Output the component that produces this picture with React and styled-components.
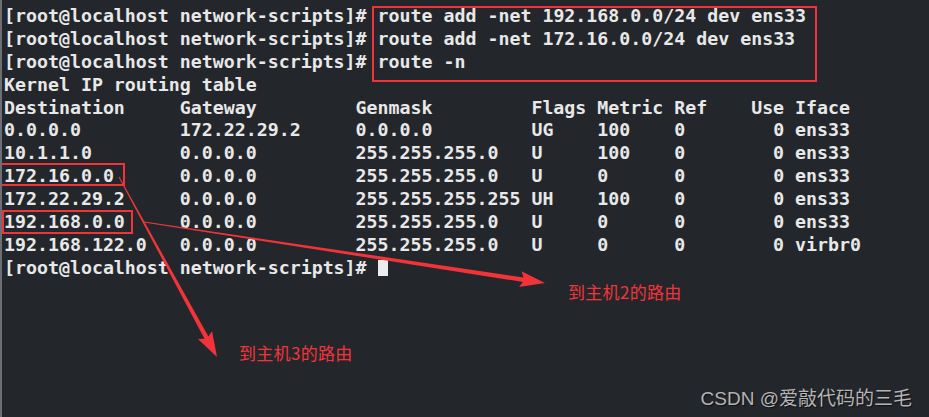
import React from 'react';
import styled, { createGlobalStyle } from 'styled-components';

const RED = '#f2343a';

const Global = createGlobalStyle`
  html, body {
    margin: 0;
    padding: 0;
    background: #23272b;
  }
`;

const Screen = styled.div`
  position: relative;
  width: 929px;
  height: 417px;
  overflow: hidden;
  background: #23272b;
  border-left: 2px solid #6c6f73;
  box-sizing: border-box;
`;

const Terminal = styled.div`
  padding: 5px 0 0 2px;
  font-family: "DejaVu Sans Mono", monospace;
  font-weight: 700;
  font-size: 18.25px;
  line-height: 22.9px;
  color: #e8e8e8;
  white-space: pre;
`;

const Line = styled.div`
  height: 22.9px;
`;

const Commands = styled.div`
  display: flex;
`;

const Prompts = styled.div`
  display: flex;
  flex-direction: column;
`;

// red frame the author drew round the typed commands
const CommandBox = styled.div`
  position: relative;
  display: flex;
  flex-direction: column;

  &::after {
    content: '';
    position: absolute;
    left: -6px;
    top: 1px;
    right: -11px;
    bottom: -8px;
    border: 2px solid ${RED};
  }
`;

// red frame round one destination cell
const Marked = styled.span`
  position: relative;

  &::after {
    content: '';
    position: absolute;
    left: ${p => p.$l}px;
    right: ${p => p.$r}px;
    top: ${p => p.$t}px;
    bottom: ${p => p.$b}px;
    border: 2px solid ${RED};
  }
`;

const Cursor = styled.span`
  display: inline-block;
  width: 10px;
  height: 16px;
  background: #ececec;
  vertical-align: -2px;
`;

const Arrows = styled.svg`
  position: absolute;
  left: 0;
  top: 0;
  pointer-events: none;
`;

const Note = styled.div`
  position: absolute;
  left: ${p => p.x}px;
  top: ${p => p.y}px;
  font-family: "Noto Sans CJK SC", sans-serif;
  font-size: 17px;
  line-height: 1;
  color: ${RED};
  letter-spacing: 0.3px;
`;

const Watermark = styled.div`
  position: absolute;
  right: 17px;
  bottom: 9px;
  font-family: "Liberation Sans", "Noto Sans CJK SC", sans-serif;
  font-size: 19px;
  line-height: 1;
  color: #b4b4b4;
  text-shadow: 1px 1px 1px rgba(0, 0, 0, 0.6);
`;

const PROMPT = '[root@localhost network-scripts]# ';

const commands = [
  'route add -net 192.168.0.0/24 dev ens33',
  'route add -net 172.16.0.0/24 dev ens33',
  'route -n',
];

const rows = [
  { dest: '0.0.0.0', rest: '172.22.29.2     0.0.0.0         UG    100    0        0 ens33' },
  { dest: '10.1.1.0', rest: '0.0.0.0         255.255.255.0   U     100    0        0 ens33' },
  { dest: '172.16.0.0', rest: '0.0.0.0         255.255.255.0   U     0      0        0 ens33', mark: { l: -6, r: 0, t: -2, b: 0 } },
  { dest: '172.22.29.2', rest: '0.0.0.0         255.255.255.255 UH    100    0        0 ens33' },
  { dest: '192.168.0.0', rest: '0.0.0.0         255.255.255.0   U     0      0        0 ens33', mark: { l: -2, r: 3, t: -1, b: -2 } },
  { dest: '192.168.122.0', rest: '0.0.0.0         255.255.255.0   U     0      0        0 virbr0' },
];

// tapered arrow: thin tail, wider shaft near the head, triangle head
const arrowPoints = (x1, y1, x2, y2) => {
  const dx = x2 - x1;
  const dy = y2 - y1;
  const len = Math.hypot(dx, dy);
  const ux = dx / len;
  const uy = dy / len;
  const nx = -uy;
  const ny = ux;
  const headLen = 22;
  const headW = 8;
  const shaftW = 2.2;
  const bx = x2 - ux * headLen;
  const by = y2 - uy * headLen;
  const pts = [
    [x1 + nx * 0.5, y1 + ny * 0.5],
    [bx + nx * shaftW, by + ny * shaftW],
    [bx + nx * headW - ux * 3, by + ny * headW - uy * 3],
    [x2, y2],
    [bx - nx * headW - ux * 3, by - ny * headW - uy * 3],
    [bx - nx * shaftW, by - ny * shaftW],
    [x1 - nx * 0.5, y1 - ny * 0.5],
  ];
  return pts.map(p => p.map(v => v.toFixed(1)).join(',')).join(' ');
};

const Row = ({ dest, rest, mark }) => {
  const pad = ' '.repeat(16 - dest.length);
  return (
    <Line>
      {mark ? (
        <Marked $l={mark.l} $r={mark.r} $t={mark.t} $b={mark.b}>
          {dest + ' '}
        </Marked>
      ) : (
        dest + ' '
      )}
      {pad.slice(1) + rest}
    </Line>
  );
};

const App = () => (
  <>
    <Global />
    <Screen>
      <Terminal>
        <Commands>
          <Prompts>
            {commands.map((c, i) => (
              <Line key={i}>{PROMPT}</Line>
            ))}
          </Prompts>
          <CommandBox>
            {commands.map((c, i) => (
              <Line key={i}>{c}</Line>
            ))}
          </CommandBox>
        </Commands>
        <Line>Kernel IP routing table</Line>
        <Line>Destination     Gateway         Genmask         Flags Metric Ref    Use Iface</Line>
        {rows.map((r, i) => (
          <Row key={i} {...r} />
        ))}
        <Line>
          {PROMPT}
          <Cursor />
        </Line>
      </Terminal>

      <Arrows width="929" height="417">
        <polygon points={arrowPoints(117, 177, 215, 357)} fill={RED} />
        <polygon points={arrowPoints(142, 222, 543, 283)} fill={RED} />
      </Arrows>

      <Note x={237} y={344}>到主机3的路由</Note>
      <Note x={566} y={283}>到主机2的路由</Note>

      <Watermark>CSDN @爱敲代码的三毛</Watermark>
    </Screen>
  </>
);

export default App;
